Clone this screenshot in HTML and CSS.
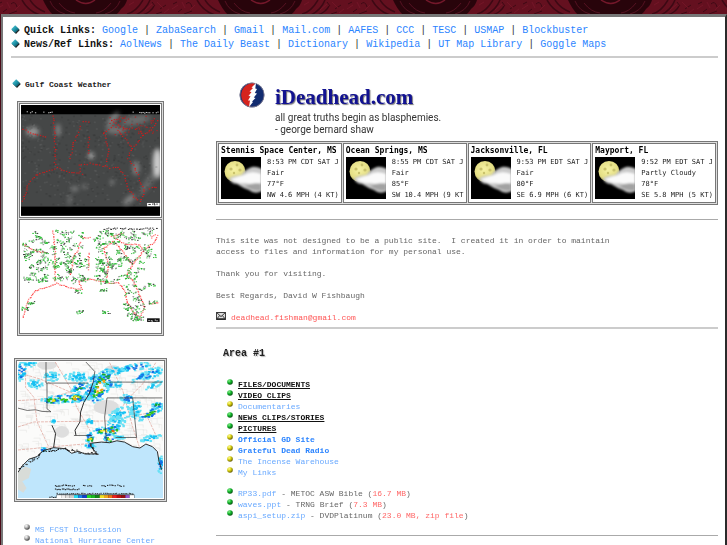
FILE: index.html
```html
<!DOCTYPE html>
<html lang="en">
<head>
<meta charset="utf-8">
<title>iDeadhead.com</title>
<link rel="stylesheet" href="styles.css">
</head>
<body>
<svg class="defs" aria-hidden="true">
  <defs>
    <linearGradient id="teal" x1="0" y1="0" x2="1" y2="1"><stop offset="0" stop-color="#5fd0dc"/><stop offset=".5" stop-color="#1c93a8"/><stop offset="1" stop-color="#07303c"/></linearGradient>
    <radialGradient id="green" cx=".35" cy=".3" r=".75"><stop offset="0" stop-color="#8df08d"/><stop offset=".45" stop-color="#12b82c"/><stop offset="1" stop-color="#04480e"/></radialGradient>
    <radialGradient id="yellow" cx=".35" cy=".3" r=".75"><stop offset="0" stop-color="#ffff9a"/><stop offset=".45" stop-color="#d8d010"/><stop offset="1" stop-color="#5c5400"/></radialGradient>
    <radialGradient id="gray" cx=".35" cy=".3" r=".75"><stop offset="0" stop-color="#fff"/><stop offset=".45" stop-color="#b4b4b4"/><stop offset="1" stop-color="#333"/></radialGradient>
    <radialGradient id="moon" cx=".45" cy=".4" r=".6"><stop offset="0" stop-color="#f6f2a4"/><stop offset=".75" stop-color="#e4de84"/><stop offset="1" stop-color="#9a9550"/></radialGradient>
    <filter id="soft" x="-30%" y="-30%" width="160%" height="160%"><feGaussianBlur stdDeviation="1"/></filter>
    <filter id="haze" x="-30%" y="-30%" width="160%" height="160%"><feGaussianBlur stdDeviation="6"/></filter>
    <symbol id="diamond" viewBox="0 0 9 9"><path d="M4.5 1.2 8.8 5 5 8.9 1.2 5.2Z" fill="#222"/><path d="M4.2.3 8.2 4.2 4.2 8.1.2 4.2Z" fill="url(#teal)"/></symbol>
    <symbol id="ball-green" viewBox="0 0 6 6"><circle cx="3" cy="3" r="2.8" fill="url(#green)"/></symbol>
    <symbol id="ball-yellow" viewBox="0 0 6 6"><circle cx="3" cy="3" r="2.8" fill="url(#yellow)"/></symbol>
    <symbol id="ball-gray" viewBox="0 0 6 6"><circle cx="3" cy="3" r="2.8" fill="url(#gray)"/></symbol>
    <symbol id="night" viewBox="0 0 40 42">
      <rect width="40" height="42" fill="#000"/>
      <circle cx="14" cy="14.5" r="10.5" fill="url(#moon)"/>
      <g fill="#c9c26c"><circle cx="10" cy="12" r="1.6"/><circle cx="16" cy="8" r="1.4"/><circle cx="19" cy="13" r="1.6"/><circle cx="13" cy="16" r="1.2"/></g>
      <g filter="url(#soft)"><path d="M8 21Q14 18 20 18Q25 12 31 10Q35 9 41 12V34Q34 38 28 33Q22 31 16 27Q10 27 8 21Z" fill="#c9c9c9"/><path d="M10 22Q18 19 23 18Q30 13 40 17V26Q30 28 25 26Q15 27 10 22Z" fill="#fafafa"/><path d="M24 29Q32 25 40 27V33Q33 35 24 29Z" fill="#a2a2a2"/></g>
    </symbol>
    <pattern id="damask" x="-5" y="0" width="175" height="15" patternUnits="userSpaceOnUse">
      <rect width="175" height="15" fill="#64101f"/>
      <path d="M48 0H132Q131 5 126 9Q123 14 120 15H58Q52 9 48 0Z" fill="#28040b"/>
      <g fill="none" stroke="#541020"><path d="M55 1Q59 11 70 14M125 1Q121 11 110 14M64 3Q71 12 80 13M116 3Q109 12 101 13"/><path d="M81 0Q91 7 100 0" stroke="#74172a" stroke-width="1.4"/></g>
      <g fill="none" stroke="#3d0813"><path d="M132 14Q141 12 148 0M141 15Q151 10 155 0M148 15Q156 12 159 6M27 0Q33 11 45 15M35 0Q40 8 50 12" stroke-width="1.6"/><path d="M3 4L7 2M8 12L12 9M16 4Q20 0 22 7M14 14L22 11M157 2L160 6M165 9L171 5M161 14L167 12"/></g>
      <g fill="none" stroke="#7a172a" stroke-width=".7"><path d="M2 9L8 5M12 2L15 8M20 10L25 5M134 5L139 2M150 10L157 4M162 2L168 8M169 13L174 9"/></g>
    </pattern>
  </defs>
</svg>
<div class="wallpaper"><svg width="100%" height="100%" aria-hidden="true"><rect width="100%" height="100%" fill="url(#damask)"/></svg></div>
<div class="frame">
  <header class="top">
    <nav class="linkline"><svg class="gem"><use href="#diamond"/></svg><span><b>Quick Links:</b> <a href="#">Google</a> | <a href="#">ZabaSearch</a> | <a href="#">Gmail</a> | <a href="#">Mail.com</a> | <a href="#">AAFES</a> | <a href="#">CCC</a> | <a href="#">TESC</a> | <a href="#">USMAP</a> | <a href="#">Blockbuster</a></span></nav>
    <nav class="linkline"><svg class="gem"><use href="#diamond"/></svg><span><b>News/Ref Links:</b> <a href="#">AolNews</a> | <a href="#">The Daily Beast</a> | <a href="#">Dictionary</a> | <a href="#">Wikipedia</a> | <a href="#">UT Map Library</a> | <a href="#">Goggle Maps</a></span></nav>
    <hr class="thick">
  </header>
  <div class="columns">
    <aside class="weather">
      <h2><svg class="gem"><use href="#diamond"/></svg>Gulf Coast Weather</h2>
      <div class="box pair">
        <a class="cell" href="#" aria-label="Satellite image"><svg id="sat" class="map" viewBox="33 29 420 335"></svg></a>
        <a class="cell" href="#" aria-label="Surface observations"><svg id="obs" class="map" viewBox="33 18 420 335"></svg></a>
      </div>
      <div class="box single">
        <a class="cell" href="#" aria-label="Radar image"><svg id="radar" class="map" viewBox="22 33 440 415"></svg></a>
      </div>
      <ul class="list">
        <li><svg class="ball"><use href="#ball-gray"/></svg><a href="#">MS FCST Discussion</a></li>
        <li><svg class="ball"><use href="#ball-gray"/></svg><a href="#">National Hurricane Center</a></li>
      </ul>
    </aside>
    <main>
      <div class="brand">
        <svg class="logo" viewBox="0 0 26 26" aria-hidden="true"><circle cx="13" cy="13" r="12.3" fill="#122c70"/><path d="M16 1A12.3 12.3 0 0 0 11 25L12 14Z" fill="#d5231d"/><circle cx="13" cy="13" r="12.1" fill="none" stroke="#8a8291" stroke-width=".8"/><path d="M17 1 12.5 5.5 14 6 10.5 9.5 12.5 10 9.5 14 11.5 14.3 9 18.5 11 18.5 10 25 14 20 13 19.5 16.5 16 14.8 15.5 18 11.5 15.8 11 18 7 16.3 6.5Z" fill="#fff"/></svg>
        <div>
          <h1>iDeadhead.com</h1>
          <p>all great truths begin as blasphemies.<br>- george bernard shaw</p>
        </div>
      </div>
      <div class="box stations">
        <section class="station"><h3>Stennis Space Center, MS</h3><div class="now"><svg class="sky"><use href="#night"/></svg><p>8:53 PM CDT SAT J<br>Fair<br>77°F<br>NW 4.6 MPH (4 KT)</p></div></section>
        <section class="station"><h3>Ocean Springs, MS</h3><div class="now"><svg class="sky"><use href="#night"/></svg><p>8:55 PM CDT SAT J<br>Fair<br>85°F<br>SW 10.4 MPH (9 KT</p></div></section>
        <section class="station"><h3>Jacksonville, FL</h3><div class="now"><svg class="sky"><use href="#night"/></svg><p>9:53 PM EDT SAT J<br>Fair<br>80°F<br>SE 6.9 MPH (6 KT)</p></div></section>
        <section class="station"><h3>Mayport, FL</h3><div class="now"><svg class="sky"><use href="#night"/></svg><p>9:52 PM EDT SAT J<br>Partly Cloudy<br>78°F<br>SE 5.8 MPH (5 KT)</p></div></section>
      </div>
      <hr>
      <div class="intro">
        <p>This site was not designed to be a public site.&nbsp; I created it in order to maintain<br>access to files and information for my personal use.</p>
        <p>Thank you for visiting.</p>
        <p>Best Regards, David W Fishbaugh</p>
        <p class="mail"><svg class="envelope" viewBox="0 0 11 9" aria-hidden="true"><rect width="11" height="9" fill="#292929"/><path d="M1 1H10V7H1Z" fill="#ddd"/><path d="M1 1 5.5 5.2 10 1M1 7.5 4 4M10 7.5 7 4" fill="none" stroke="#222" stroke-width="1"/></svg><a href="#">deadhead.fishman@gmail.com</a></p>
      </div>
      <hr class="thick">
      <section class="area">
        <h2>Area #1</h2>
        <ul class="list">
          <li><svg class="ball"><use href="#ball-green"/></svg><a class="menu" href="#">FILES/DOCUMENTS</a></li>
          <li><svg class="ball"><use href="#ball-green"/></svg><a class="menu" href="#">VIDEO CLIPS</a></li>
          <li><svg class="ball"><use href="#ball-yellow"/></svg><a href="#">Documentaries</a></li>
          <li><svg class="ball"><use href="#ball-green"/></svg><a class="menu" href="#">NEWS CLIPS/STORIES</a></li>
          <li><svg class="ball"><use href="#ball-green"/></svg><a class="menu" href="#">PICTURES</a></li>
          <li><svg class="ball"><use href="#ball-yellow"/></svg><a class="strong" href="#">Official GD Site</a></li>
          <li><svg class="ball"><use href="#ball-yellow"/></svg><a class="strong" href="#">Grateful Dead Radio</a></li>
          <li><svg class="ball"><use href="#ball-yellow"/></svg><a href="#">The Incense Warehouse</a></li>
          <li><svg class="ball"><use href="#ball-yellow"/></svg><a href="#">My Links</a></li>
        </ul>
        <ul class="list">
          <li><svg class="ball"><use href="#ball-green"/></svg><span><a href="#">RP33.pdf</a> - METOC ASW Bible (<em>16.7 MB</em>)</span></li>
          <li><svg class="ball"><use href="#ball-green"/></svg><span><a href="#">waves.ppt</a> - TRNG Brief (<em>7.3 MB</em>)</span></li>
          <li><svg class="ball"><use href="#ball-green"/></svg><span><a href="#">aspi_setup.zip</a> - DVDPlatinum (<em>23.0 MB, zip file</em>)</span></li>
        </ul>
      </section>
      <hr>
    </main>
  </div>
</div>
<script src="maps.js"></script>
</body>
</html>
```
FILE: styles.css
```css
* { box-sizing: border-box; }
body {
  margin: 0;
  min-height: 100vh;
  display: flex;
  flex-direction: column;
  background: #4c0b18;
  font-family: "Liberation Mono", monospace;
  font-size: 8px;
  line-height: 11px;
  color: #666;
}
h1, h2, h3, p, ul { margin: 0; padding: 0; }
ul { list-style: none; }
svg { display: block; flex: none; }
a { color: #69a9ff; text-decoration: none; }
em { font-style: normal; color: #ff6868; }
hr { width: 100%; margin: 0; border: 0; border-top: 1px solid #aaa; }
hr.thick { border-top: 2px solid #ccc; }
.defs { position: absolute; width: 0; height: 0; }
.wallpaper { height: 14px; }
.frame {
  flex: 1;
  margin-left: 1px;
  background: #fff;
  border: 2px solid #777;
  border-top-width: 3px;
  border-right-color: #2a2a2a;
  border-bottom: 0;
  padding: 7px 7px 0 8px;
}
.linkline {
  display: flex;
  gap: 4px;
  font-size: 10px;
  line-height: 14px;
  color: #333;
}
.linkline a { color: #2b84ff; }
.linkline b { color: #111; }
.gem { width: 9px; height: 9px; }
.linkline .gem { margin-top: 1px; }
.top hr { margin-top: 4px; }
.columns { display: flex; gap: 48px; }
.weather { width: 157px; flex: none; padding-top: 21px; }
.weather h2 {
  display: flex;
  gap: 4px;
  font-size: 8px;
  line-height: 11px;
  color: #222;
  padding-left: 1px;
}
.box { border: 1px solid #777; padding: 1px; background: #ddd; display: flex; gap: 1px; }
.cell { display: block; flex: 1; border: 1px solid #777; padding: 1px; background: #fff; }
.pair { flex-direction: column; margin: 11px 4px 0 6px; }
.single { margin: 22px 1px 0 3px; }
.map { width: 100%; height: auto; }
.weather .list { margin: 22px 0 0 13px; }
.list li { display: flex; gap: 5px; white-space: nowrap; }
.ball { width: 6px; height: 6px; }
main { flex: 1; min-width: 0; padding-top: 24px; }
.brand { display: flex; gap: 10px; padding-left: 23px; }
.logo { width: 26px; height: 26px; }
.brand h1 {
  font: bold 21px/30px "Liberation Serif", serif;
  color: #121291;
  text-shadow: 1px 1px 1px #777;
}
.brand p { font: 10px/12px Roboto, sans-serif; color: #333; }
.stations { margin-top: 5px; }
.station {
  flex: 1;
  min-width: 0;
  overflow: hidden;
  border: 1px solid #777;
  padding: 1px 2px;
  background: #fff;
  color: #222;
  white-space: nowrap;
}
.station h3 { font: bold 8px/12px "DejaVu Sans Mono", monospace; color: #000; overflow: hidden; }
.now { display: flex; gap: 6px; }
.sky { width: 40px; height: 42px; }
.now p { font: 7px/11px "DejaVu Sans Mono", monospace; }
.stations + hr { margin-top: 14px; }
.intro { display: flex; flex-direction: column; gap: 11px; margin: 15px 0 4px; }
.mail { display: flex; gap: 5px; }
.mail a { color: #ff5555; }
.envelope { width: 10px; height: 8px; }
.area { padding: 18px 0 14px 7px; }
.area h2 { font-size: 10px; line-height: 14px; color: #222; text-shadow: 1px 1px 1px #bbb; }
.area .list { margin: 18px 0 0 4px; }
.area .list + .list { margin-top: 10px; }
.list .menu { color: #111; font-weight: bold; text-decoration: underline; }
.list .strong { color: #2b84ff; font-weight: bold; }
```
FILE: maps.js
```js
let seed = 71;
function rnd() {
  seed = (seed + 0x6D2B79F5) | 0;
  let t = Math.imul(seed ^ (seed >>> 15), 1 | seed);
  t = (t + Math.imul(t ^ (t >>> 7), 61 | t)) ^ t;
  return ((t ^ (t >>> 14)) >>> 0) / 4294967296;
}
function rect(x, y, w, h, fill) {
  return `<rect x="${x.toFixed(0)}" y="${y.toFixed(0)}" width="${w}" height="${h}" fill="${fill}"/>`;
}
// Dots along a polyline, as on low-resolution weather plots.
function dotted(points, colors, step, spread) {
  let out = "";
  for (let i = 1; i < points.length; i++) {
    const [x0, y0] = points[i - 1], [x1, y1] = points[i];
    const n = Math.max(1, Math.round(Math.hypot(x1 - x0, y1 - y0) / step));
    for (let k = 0; k < n; k++) {
      const t = k / n;
      out += rect(x0 + (x1 - x0) * t + (rnd() - .5) * spread, y0 + (y1 - y0) * t + (rnd() - .5) * spread, 4, 3, colors[Math.floor(rnd() * colors.length)]);
    }
  }
  return out;
}
const borders = [
  [[37, 320], [52, 270], [75, 240], [110, 228], [140, 217], [185, 232], [215, 235], [205, 210], [240, 205], [285, 212], [300, 218], [325, 214], [345, 240], [352, 275], [372, 305], [392, 320], [404, 290], [385, 240], [370, 210], [355, 195]],
  [[210, 92], [202, 118], [188, 140], [185, 170], [177, 196]],
  [[218, 79], [244, 79]],
  [[37, 100], [60, 112], [90, 122], [112, 126]],
  [[128, 60], [134, 115], [134, 215]],
  [[236, 125], [235, 180]],
  [[282, 115], [295, 160], [290, 205]],
  [[282, 112], [310, 90], [335, 115], [368, 160], [400, 120], [390, 100], [345, 98], [305, 75], [345, 65]],
  [[400, 120], [435, 92], [445, 68]],
  [[368, 160], [350, 195]],
  [[425, 80], [440, 65]],
  [[420, 280], [448, 275]]
];
const ticks = (y, color) => {
  let s = "";
  for (let x = 50; x < 448; x += 5) if ((x < 130 || x > 365) && rnd() > .4) s += rect(x, y + rnd() * 4, 4, 3, color);
  return s;
};
const cloud = (x, y, rx, ry, o, a = 0) => `<ellipse cx="${x}" cy="${y}" rx="${rx}" ry="${ry}" transform="rotate(${a} ${x} ${y})" fill="#ddd" opacity="${o}"/>`;

let sat = rect(33, 29, 420, 335, "#000") + rect(33, 57, 420, 279, "#454747");
sat += `<g filter="url(#haze)">${cloud(68, 110, 20, 15, .5)}${cloud(145, 105, 8, 20, .4)}${cloud(310, 72, 9, 30, .4, 40)}${cloud(380, 75, 45, 14, .25, -10)}${cloud(320, 105, 30, 12, .3)}${cloud(445, 205, 14, 45, .9)}${cloud(380, 220, 12, 22, .35)}${cloud(420, 260, 12, 50, .2, 35)}${cloud(360, 315, 22, 10, .4, -40)}${cloud(245, 182, 9, 9, .7)}${cloud(195, 282, 12, 8, .35)}${cloud(225, 275, 6, 6, .5)}${cloud(308, 262, 5, 7, .6)}${cloud(180, 315, 4, 18, .35, 10)}</g>`;
for (let i = 0; i < 420; i++) sat += `<g opacity=".16">${rect(33 + rnd() * 412, 58 + rnd() * 272, 6, 5, rnd() > .5 ? "#888" : "#222")}</g>`;
borders.forEach(b => { sat += dotted(b, ["#d41818", "#e81414"], 8, 4); });
for (let i = 0; i < 40; i++) sat += rect(300 + rnd() * 148, 60 + rnd() * 60, 4, 3, "#b42020");
sat += ticks(48, "#ccc") + rect(414, 325, 38, 10, "#fff") + dotted([[418, 328], [446, 328]], ["#222"], 5, 4);
document.getElementById("sat").innerHTML = sat;

let obs = rect(33, 18, 420, 335, "#fff");
borders.forEach(b => { obs += dotted(b.map(([x, y]) => [x, y - 12]), ["#ff3838", "#ff6666"], 5, 3); });
for (let i = 0; i < 225; i++) {
  let x, y;
  if (i < 200) { x = 38 + rnd() * 395; y = 44 + rnd() * (x > 395 ? 80 : 158); if (x > 228 && x < 252) x += 26; }
  else { x = 335 + rnd() * 65; y = 205 + rnd() * 105; }
  for (let k = 0; k < 6; k++) obs += rect(x + rnd() * 16 - 4, y + rnd() * 12 - 4, 3 + Math.floor(rnd() * 3), 3, ["#22b82a", "#35c43d", "#78cf7d", "#999", "#333", "#20b52a"][Math.floor(rnd() * 6)]);
}
[[205, 230], [208, 292], [290, 292], [428, 210], [60, 265], [45, 282], [430, 262], [375, 315], [280, 225]].forEach(([x, y]) => {
  for (let k = 0; k < 14; k++) obs += rect(x + rnd() * 24 - 12, y + rnd() * 10 - 5, 4, 3, k % 3 ? "#36c33e" : "#444");
});
obs += dotted([[280, 40], [448, 40]], ["#222", "#444"], 5, 5) + rect(414, 312, 38, 11, "#111") + dotted([[418, 317], [446, 317]], ["#ddd"], 6, 4);
document.getElementById("obs").innerHTML = obs;

const coast = "M22 368L35 348L55 328L80 320L98 302L130 293L165 296L185 310L205 304L225 312L262 312L245 292L240 280L275 276L300 278L322 272L345 276L370 290L392 294L410 282L430 290L445 305L450 335L458 360";
let radar = rect(22, 33, 440, 415, "#fbfbfa");
for (let i = 0; i < 320; i++) {
  const x = 22 + rnd() * 430, y = 33 + rnd() * 290;
  radar += `<path d="M${x} ${y}h${10 + rnd() * 16}v${6 + rnd() * 12}" fill="none" stroke="#e2e2e0" stroke-width="1.5"/>`;
}
[[110, 42, 30, 14], [155, 245, 22, 18], [290, 170, 38, 22], [310, 55, 24, 12], [345, 290, 25, 12]].forEach(([x, y, a, b]) => { radar += `<ellipse cx="${x}" cy="${y}" rx="${a}" ry="${b}" fill="#dedede"/>`; });
radar += `<g fill="none" stroke="#dc9a90" stroke-width="2" stroke-dasharray="9 3"><path d="M45 33V110L70 140L80 215L115 290M22 65L90 85L240 150M22 230L70 215L290 212L460 180M135 33L180 110L200 170L240 240L250 290M300 35L340 120L370 230L390 290M440 35L400 100L350 150L300 240M22 300L130 290L300 275M410 190L445 265M22 150L110 145L240 105"/></g>`;
radar += `<path d="${coast}L462 360V448H22Z" fill="#bfe6fc"/><path d="M22 365L45 350L62 358L55 385L35 395L48 415L38 430L22 420Z" fill="#d8dcd8"/>`;
// Echo cells: stronger colours sit nearer the core.
function echo(cx, cy, rx, ry, peak, angle = 0) {
  const colors = ["#66e0f5", "#17c0f2", "#1671e6", "#12a82f", "#35c718", "#f0da20", "#f59b16", "#e85a18"];
  const cells = [], a = angle * Math.PI / 180, n = Math.round(rx * ry / 9) + 8;
  for (let i = 0; i < n; i++) {
    const r = Math.sqrt(rnd()) * 1.15, t = rnd() * Math.PI * 2, u = rx * r * Math.cos(t), v = ry * r * Math.sin(t);
    const level = Math.max(0, Math.min(peak, Math.floor((1.1 - r + (rnd() - .5) * .5) * (peak + 1))));
    cells.push([level, cx + u * Math.cos(a) - v * Math.sin(a), cy + u * Math.sin(a) + v * Math.cos(a)]);
  }
  return cells.sort((p, q) => p[0] - q[0]).map(([l, x, y]) => rect(x - 3, y - 3, 7, 5, colors[l])).join("");
}
[[262, 85, 24, 12, 2], [272, 108, 24, 50, 6, 28], [170, 145, 68, 12, 4, -3], [200, 143, 18, 10, 7], [125, 150, 20, 9, 5], [210, 110, 26, 12, 3, -20], [205, 78, 38, 12, 1], [240, 120, 12, 24, 2, 30], [125, 78, 22, 12, 1], [32, 62, 12, 28, 2], [75, 100, 20, 12, 1], [58, 40, 20, 7, 1], [375, 50, 46, 10, 2, -12], [425, 70, 34, 14, 2, -20], [390, 80, 26, 6, 2, -35], [320, 60, 20, 10, 2], [310, 102, 26, 9, 2], [435, 105, 24, 7, 1, -30], [355, 145, 22, 12, 2], [335, 190, 38, 16, 1, -20], [320, 220, 24, 20, 1], [380, 180, 14, 24, 1, 20], [425, 190, 36, 10, 4, -30], [445, 165, 15, 8, 3], [285, 242, 30, 9, 5], [310, 242, 14, 12, 7], [300, 265, 16, 12, 5], [240, 265, 10, 15, 5], [240, 288, 16, 6, 2], [330, 262, 14, 6, 1], [130, 213, 6, 6, 1], [240, 215, 12, 7, 1], [425, 265, 28, 8, 1, -15], [454, 345, 8, 24, 2], [98, 300, 7, 6, 2]].forEach(e => { radar += echo(...e); });
radar += `<g fill="none" stroke="#2a2a2a" stroke-width="2"><path d="M107 33V97H235M110 97V175L122 184L95 183L75 178L50 180L22 173M300 94H460M292 142H460M292 142L285 200L290 275M370 142L382 262H318M192 256H245M228 33L255 62L250 95"/><path d="M250 95L238 130L222 155L212 185L210 215L195 240L198 256M125 225L136 250L130 293" stroke-width="3"/><path d="${coast}" stroke-width="3"/></g>`;
radar += dotted([[22, 355], [80, 320], [98, 302], [165, 296], [205, 304], [262, 312], [240, 280]], ["#111", "#444"], 4, 7);
radar += dotted([[133, 407], [195, 407]], ["#111"], 5, 4) + dotted([[218, 407], [250, 407]], ["#111"], 6, 3) + dotted([[275, 407], [345, 407]], ["#111"], 6, 4) + dotted([[133, 418], [210, 418]], ["#111"], 5, 3) + dotted([[140, 431], [375, 431]], ["#333"], 6, 3) + dotted([[119, 442], [136, 442]], ["#111"], 4, 4);
radar += rect(139, 435, 236, 12, "#222");
["#fff", "#eee", "#ddd", "#ccc", "#25dff5", "#1685ee", "#103dd0", "#23dd25", "#19bb20", "#14851a", "#eee025", "#efa51b", "#ee7313", "#ee2020", "#bb1111", "#961010", "#9955cc", "#fff"].forEach((c, i) => { radar += rect(140 + i * 13, 437, 13, 9, c); });
document.getElementById("radar").innerHTML = radar;
```
